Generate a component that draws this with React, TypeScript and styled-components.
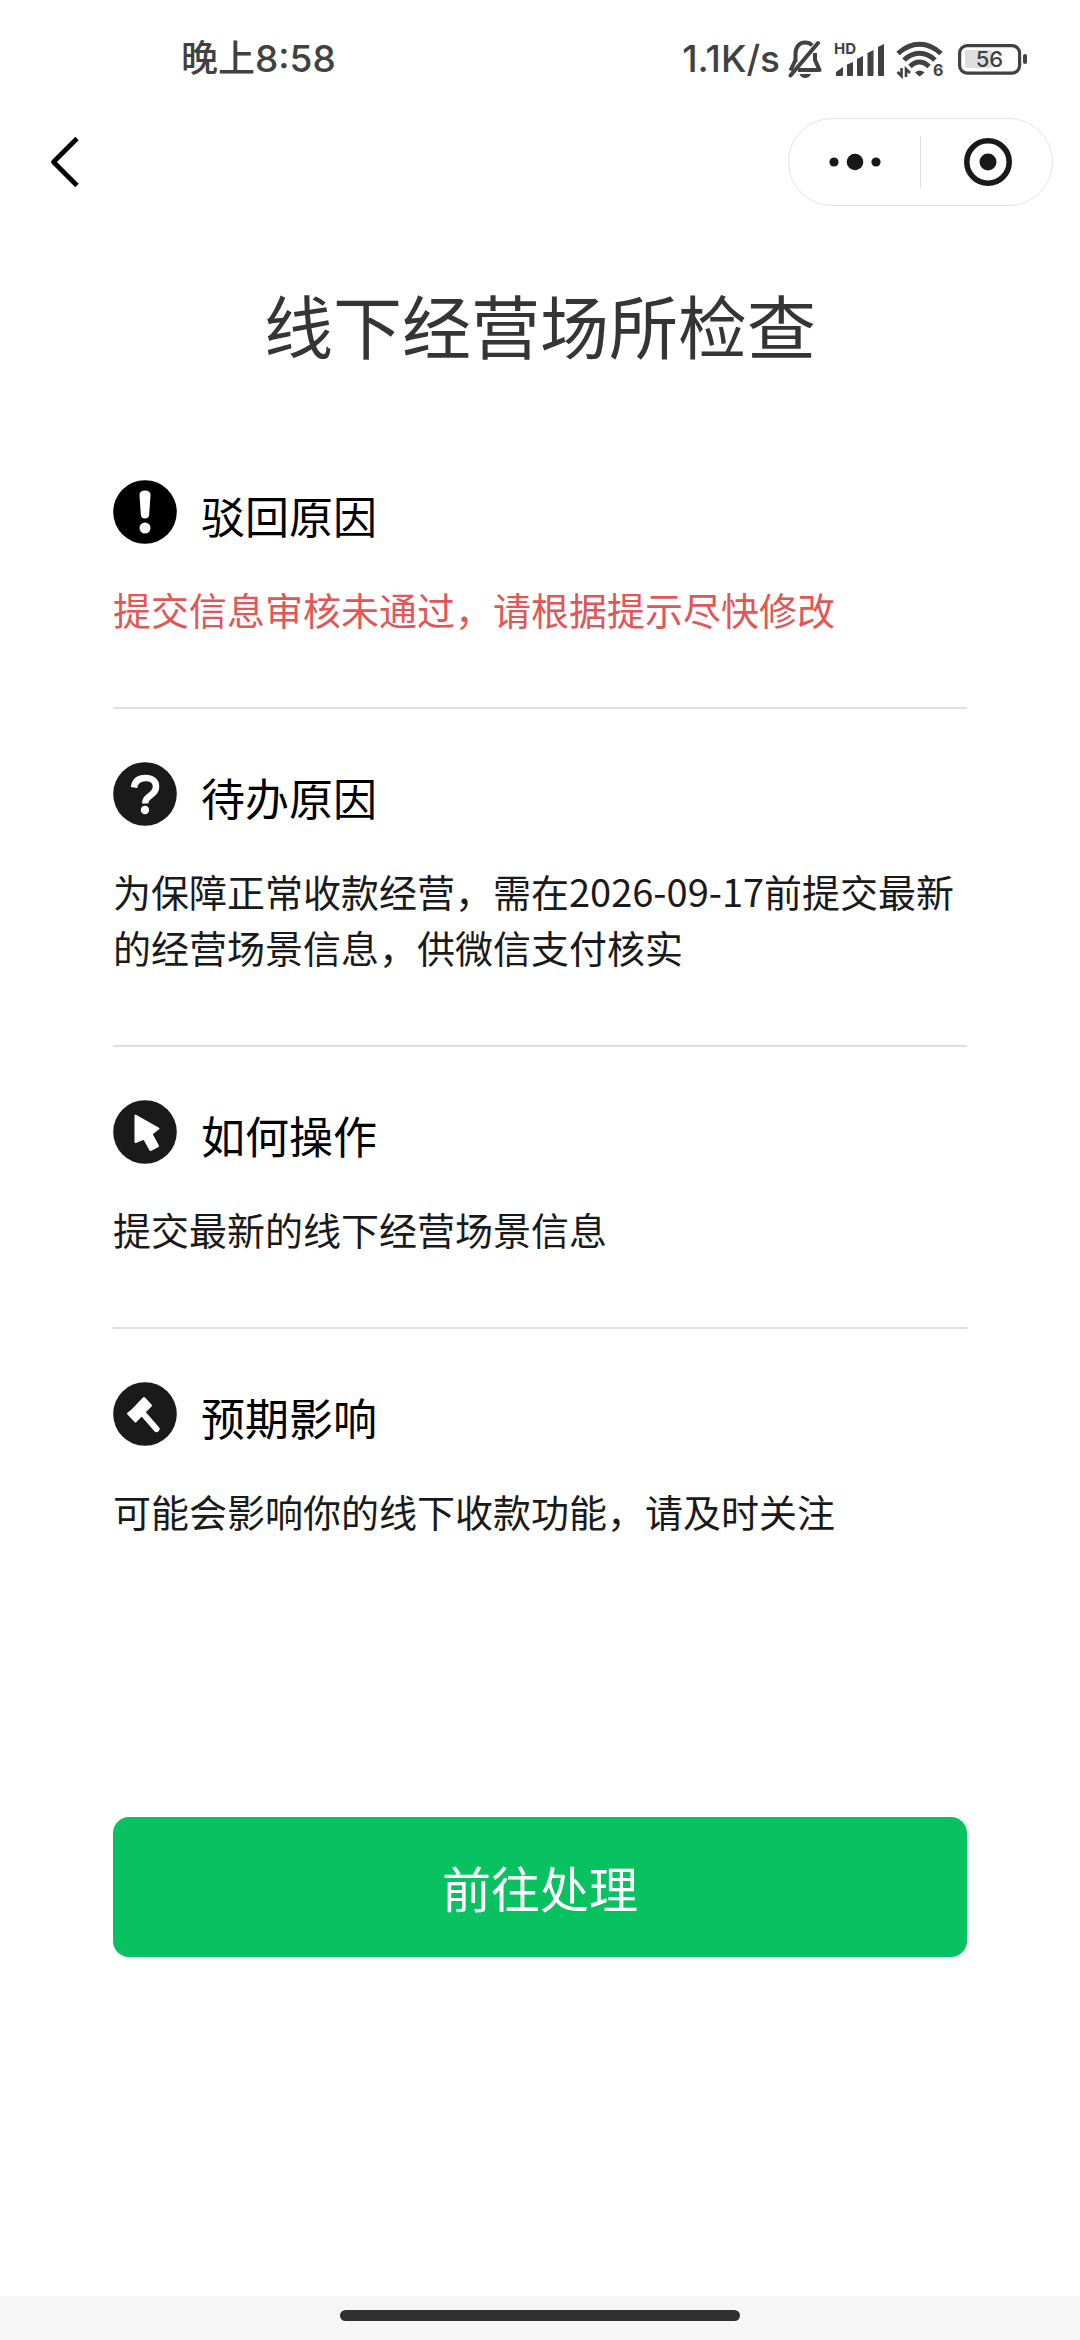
import React from "react";
import styled, { createGlobalStyle } from "styled-components";

const GlobalStyle = createGlobalStyle`
  * { box-sizing: border-box; }
  body {
    margin: 0;
    background: #ffffff;
    font-family: "Noto Sans CJK SC", "Noto Sans", sans-serif;
  }
`;

const Page = styled.div`
  display: flex;
  flex-direction: column;
  min-height: 100vh;
`;

const StatusBar = styled.header`
  display: flex;
  justify-content: space-between;
  align-items: center;
  height: 118px;
  padding: 0 53px 0 181px;
  color: #414141;
  font-family: Inter, "Noto Sans CJK SC", sans-serif;
  font-size: 37px;
  font-weight: 500;
  line-height: 48px;
`;

const StatusIcons = styled.div`
  display: flex;
  align-items: center;
  gap: 12px;

  svg { display: block; }
`;

const Speed = styled.span`
  margin-right: -4px;
`;

const NavBar = styled.nav`
  display: flex;
  justify-content: space-between;
  align-items: center;
  padding: 0 27px 0 40px;
`;

const IconButton = styled.button`
  display: flex;
  align-items: center;
  justify-content: center;
  height: 88px;
  padding: 0;
  border: 0;
  background: none;
  cursor: pointer;
`;

const Capsule = styled.div`
  display: flex;
  align-items: center;
  width: 265px;
  height: 88px;
  border: 1px solid #e4e4e4;
  border-radius: 44px;

  ${IconButton} { flex: 1; }
`;

const CapsuleDivider = styled.span`
  width: 1px;
  height: 52px;
  background: #dedede;
`;

const Main = styled.main`
  flex: 1;
  padding: 68px 113px 96px;
`;

const Title = styled.h1`
  margin: 0 0 53px;
  color: #353535;
  font-size: 69px;
  font-weight: 400;
  line-height: 100px;
  text-align: center;
`;

const Section = styled.section`
  padding: 53px 0 70px;
  border-bottom: 2px solid #dedede;

  &:last-of-type { border-bottom: 0; }
`;

const SectionHead = styled.div`
  display: flex;
  align-items: flex-start;
  gap: 24px;
  margin-bottom: 33px;
`;

const SectionTitle = styled.h2`
  margin: 0;
  padding-top: 2px;
  color: #000000;
  font-size: 44px;
  font-weight: 400;
  line-height: 66px;
`;

const SectionText = styled.p<{ $alert?: boolean }>`
  margin: 0;
  color: ${(p) => (p.$alert ? "#e15656" : "#1a1a1a")};
  font-size: 38px;
  line-height: 56px;
`;

const PrimaryButton = styled.button`
  display: block;
  width: 100%;
  height: 140px;
  margin-top: 208px;
  border: 0;
  border-radius: 16px;
  background: #08c160;
  color: #ffffff;
  font-family: inherit;
  font-size: 49px;
  line-height: 72px;
  cursor: pointer;
`;

const GestureBar = styled.footer`
  display: flex;
  justify-content: center;
  height: 44px;
  padding-top: 14px;
  background: #f6f6f6;
`;

const GestureHandle = styled.span`
  width: 37%;
  height: 11px;
  border-radius: 6px;
  background: #303030;
`;

const INK = "#414141";

const MutedBell = () => (
  <svg width="34" height="38" viewBox="0 0 34 38" fill="none" stroke={INK} strokeWidth="4">
    <path d="M2.500 35.500 L30 3" strokeLinecap="round" />
    <path d="M7.500 22 V14 C7.500 7 11 2.600 17 2.600 C20 2.600 22.500 3.600 24.200 5.400" />
    <path d="M27 13 V20 L31.500 30 H10" strokeLinejoin="round" />
    <path d="M7.500 20 L2.500 30.500" />
    <path d="M11.500 34 H23 C22 36.500 20 38 17.200 38 C14.500 38 12.500 36.500 11.500 34 Z" fill={INK} stroke="none" />
  </svg>
);

const Signal = () => (
  <svg width="50" height="40" viewBox="0 -3 50 40" fill={INK}>
    <text x="0" y="12" fontFamily="Inter, sans-serif" fontSize="15" fontWeight="700">HD</text>
    <path d="M2 33 V30 L9 25 V33 Q9 34 8 34 H3 Q2 34 2 33Z" />
    <path d="M13 22.500 L19 20 V33 Q19 34 18 34 H14 Q13 34 13 33Z" />
    <path d="M23 17 L29 14 V33 Q29 34 28 34 H24 Q23 34 23 33Z" />
    <path d="M33.500 11 L39.500 8 V33 Q39.500 34 38.500 34 H34.500 Q33.500 34 33.500 33Z" />
    <path d="M44 5 L50 2 V33 Q50 34 49 34 H45 Q44 34 44 33Z" />
  </svg>
);

const Wifi = () => (
  <svg width="50" height="44" viewBox="0 -4 50 44" fill="none" stroke={INK} strokeWidth="5">
    <path d="M2 12.500 Q12 3.200 23.500 3.200 Q35 3.200 45 12.500" />
    <path d="M8 19 Q15 12.200 23.500 12.200 Q32 12.200 39 19" />
    <path d="M14 25.500 Q18.500 21 23.500 21 Q28.500 21 33 25.500" />
    <path d="M19 31.500 Q23.500 27.500 28.500 31.500 L24.800 34.800 Q23.700 35.600 22.600 34.800Z" fill={INK} stroke="none" />
    <path d="M5.500 27 V35 L1.500 31 M10 36 V28 L14 32" strokeWidth="2.600" />
    <text x="37" y="35" fill={INK} stroke="none" fontFamily="Inter, sans-serif" fontSize="16" fontWeight="700">6</text>
  </svg>
);

const Battery = () => (
  <svg width="69" height="32" viewBox="0 0 69 32" fill="none">
    <rect x="7" y="7" width="27" height="18" rx="2" fill="#dedede" />
    <rect x="1.600" y="2.600" width="60" height="27.500" rx="7.500" stroke={INK} strokeWidth="3.200" />
    <rect x="65" y="11" width="4" height="10" rx="2" fill={INK} />
    <text x="31.500" y="24" textAnchor="middle" fill={INK} fontFamily="Inter, sans-serif" fontSize="22" fontWeight="500">56</text>
  </svg>
);

const BackArrow = () => (
  <svg width="48" height="56" viewBox="0 0 48 56" fill="none" stroke="#000" strokeWidth="4.800" strokeLinejoin="round">
    <path d="M37 4.500 L13.500 28 L37 51.500" />
  </svg>
);

const MoreDots = () => (
  <svg width="52" height="18" viewBox="0 0 52 18" fill="#191919">
    <circle cx="5" cy="9" r="4.600" />
    <circle cx="26" cy="9" r="8.300" />
    <circle cx="47" cy="9" r="4.600" />
  </svg>
);

const Target = () => (
  <svg width="50" height="50" viewBox="0 0 50 50" fill="none">
    <circle cx="26" cy="25" r="21.200" stroke="#191919" strokeWidth="5.600" />
    <circle cx="26" cy="25" r="8.500" fill="#191919" />
  </svg>
);

const Disc = ({ fill = "#1a1a1a", children }: { fill?: string; children: React.ReactNode }) => (
  <svg width="64" height="64" viewBox="0 0 64 64" fill="none" aria-hidden="true">
    <circle cx="32" cy="32" r="31.800" fill={fill} />
    {children}
  </svg>
);

const sections = [
  {
    title: "驳回原因",
    text: "提交信息审核未通过，请根据提示尽快修改",
    alert: true,
    icon: (
      <Disc fill="#000000">
        <path d="M26.500 15 Q26.500 10.500 32 10.500 Q37.500 10.500 37.500 15 L36.200 34.500 Q36 38.500 32 38.500 Q28 38.500 27.800 34.500Z" fill="#fff" />
        <circle cx="32" cy="48" r="5.500" fill="#fff" />
      </Disc>
    ),
  },
  {
    title: "待办原因",
    text: "为保障正常收款经营，需在2026-09-17前提交最新的经营场景信息，供微信支付核实",
    icon: (
      <Disc>
        <path d="M21 25.500 C22 18.500 26 16 32.500 16 C39 16 43 19.500 43 24.500 C43 28.500 41 30.800 38 33 C34 36 32.200 37.500 32.200 41.500" stroke="#fff" strokeWidth="6.500" />
        <circle cx="32" cy="48" r="4.200" fill="#fff" />
      </Disc>
    ),
  },
  {
    title: "如何操作",
    text: "提交最新的线下经营场景信息",
    icon: (
      <Disc>
        <path d="M22.500 15.500 L45.500 28.500 L38.500 34 L45 46 L37.500 50 L31 38.500 L22.500 42Z" fill="#fff" stroke="#fff" strokeWidth="2" strokeLinejoin="round" />
      </Disc>
    ),
  },
  {
    title: "预期影响",
    text: "可能会影响你的线下收款功能，请及时关注",
    icon: (
      <Disc>
        <path d="M31 16 L38 23.500 L22.500 39.500 L15 31.500 Q19 29 22 25.500 Q26 21 31 16Z" fill="#fff" stroke="#fff" strokeWidth="2" strokeLinejoin="round" />
        <path d="M29.500 31 L43.500 47" stroke="#fff" strokeWidth="6" strokeLinecap="round" />
      </Disc>
    ),
  },
];

export default function App() {
  return (
    <Page>
      <GlobalStyle />
      <StatusBar>
        <span>晚上8:58</span>
        <StatusIcons>
          <Speed>1.1K/s</Speed>
          <MutedBell />
          <Signal />
          <Wifi />
          <Battery />
        </StatusIcons>
      </StatusBar>
      <NavBar>
        <IconButton aria-label="返回"><BackArrow /></IconButton>
        <Capsule>
          <IconButton aria-label="更多"><MoreDots /></IconButton>
          <CapsuleDivider />
          <IconButton aria-label="关闭"><Target /></IconButton>
        </Capsule>
      </NavBar>
      <Main>
        <Title>线下经营场所检查</Title>
        {sections.map((s) => (
          <Section key={s.title}>
            <SectionHead>
              {s.icon}
              <SectionTitle>{s.title}</SectionTitle>
            </SectionHead>
            <SectionText $alert={s.alert}>{s.text}</SectionText>
          </Section>
        ))}
        <PrimaryButton>前往处理</PrimaryButton>
      </Main>
      <GestureBar><GestureHandle /></GestureBar>
    </Page>
  );
}
